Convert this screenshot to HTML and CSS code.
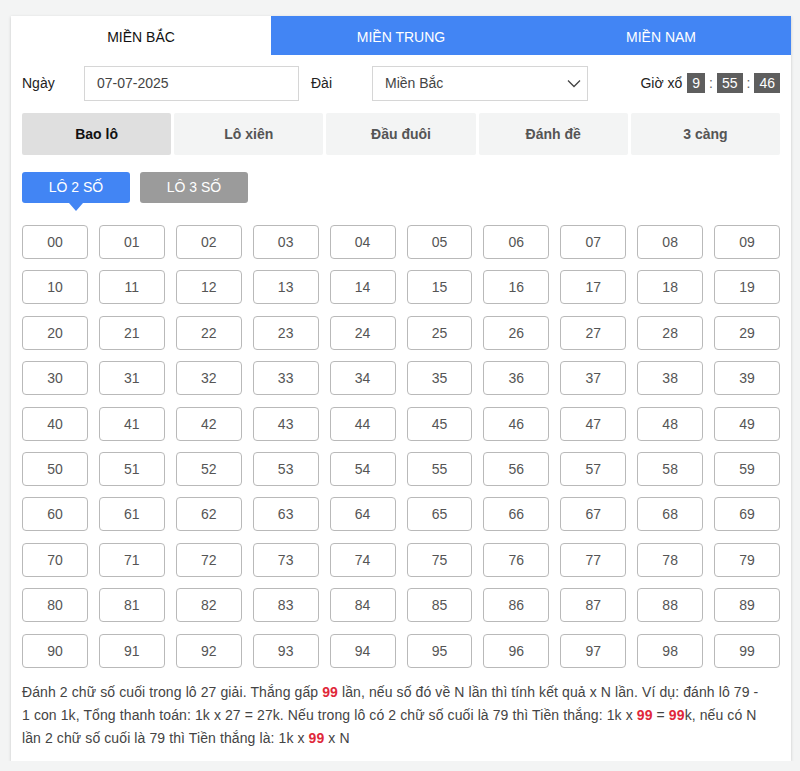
FILE: index.html
```html
<!DOCTYPE html>
<html lang="vi">
  <head>
    <meta charset="UTF-8" />
    <meta name="viewport" content="width=device-width, initial-scale=1.0" />
    <title>Bao lô</title>
    <link rel="stylesheet" href="styles.css">
  </head>
  <body>
    <div class="card">
      <div class="region-tabs">
        <button class="region-tab active">MIỀN BẮC</button>
        <button class="region-tab">MIỀN TRUNG</button>
        <button class="region-tab">MIỀN NAM</button>
      </div>

      <div class="form-row">
        <label class="label label-date">Ngày</label>
        <div class="input date-input">07-07-2025</div>
        <label class="label label-dai">Đài</label>
        <div class="input select-input">
          <span>Miền Bắc</span>
          <svg width="14" height="9" viewBox="0 0 14 9"><path d="M1 1.5 L7 7.5 L13 1.5" fill="none" stroke="#444" stroke-width="1.3"/></svg>
        </div>
        <div class="clock">
          <span class="clock-label">Giờ xổ</span>
          <span class="clock-box">9</span>
          <span class="clock-sep">:</span>
          <span class="clock-box">55</span>
          <span class="clock-sep">:</span>
          <span class="clock-box">46</span>
        </div>
      </div>

      <div class="game-tabs">
        <button class="game-tab active">Bao lô</button>
        <button class="game-tab">Lô xiên</button>
        <button class="game-tab">Đầu đuôi</button>
        <button class="game-tab">Đánh đề</button>
        <button class="game-tab">3 càng</button>
      </div>

      <div class="type-row">
        <button class="type-btn active">LÔ 2 SỐ</button>
        <button class="type-btn">LÔ 3 SỐ</button>
      </div>

      <div id="numbers" class="numbers"></div>

      <p class="note">
        Đánh 2 chữ số cuối trong lô 27 giải. Thắng gấp <b>99</b> lần, nếu số đó về N lần thì tính kết quả x N lần. Ví dụ: đánh lô 79 - 1 con 1k, Tổng thanh toán: 1k x 27 = 27k. Nếu trong lô có 2 chữ số cuối là 79 thì Tiền thắng: 1k x <b>99</b> = <b>99</b>k, nếu có N lần 2 chữ số cuối là 79 thì Tiền thắng là: 1k x <b>99</b> x N
      </p>
    </div>

    <script>
      // tạo bảng số 00-99
      const grid = document.getElementById("numbers");
      let html = "";
      for (let i = 0; i < 100; i++) {
        const n = i < 10 ? "0" + i : "" + i;
        html += `<button class="num">${n}</button>`;
      }
      grid.innerHTML = html;
    </script>
  </body>
</html>
```

FILE: styles.css
```css
body {
  font-family: "Liberation Sans", Arial, sans-serif;
  margin: 0;
  padding: 16px 9px 0 11px;
  background: #f3f4f4;
  color: #333;
}

button {
  font-family: inherit;
  cursor: pointer;
}

.card {
  background: white;
  padding: 0 11px 11px;
  box-shadow: 0 1px 3px rgba(0, 0, 0, 0.18);
}

.region-tabs {
  display: flex;
  margin: 0 -11px;
  background: #4285f4;
}

.region-tab {
  flex: 1;
  height: 39px;
  border: none;
  background: #4285f4;
  color: white;
  font-size: 14px;
  padding: 2px 0 0;
}

.region-tab.active {
  background: white;
  color: #111;
}

.form-row {
  display: flex;
  align-items: center;
  margin-top: 11px;
  height: 34px;
  font-size: 14px;
}

.label {
  color: #222;
}

.label-date {
  width: 62px;
}

.label-dai {
  margin-left: 12px;
  width: 61px;
}

.input {
  box-sizing: border-box;
  height: 35px;
  border: 1px solid #d6d6d6;
  padding: 0 12px;
  display: flex;
  align-items: center;
  color: #444;
}

.date-input {
  width: 215px;
}

.select-input {
  width: 216px;
  justify-content: space-between;
  padding-right: 6px;
}

.clock {
  margin-left: auto;
  display: flex;
  align-items: center;
}

.clock-label {
  margin-right: 5px;
  color: #222;
}

.clock-box {
  background: #5e5e5e;
  color: white;
  height: 20px;
  line-height: 20px;
  padding: 0 5px;
  font-size: 14px;
}

.clock-sep {
  color: #666;
  margin: 0 4px;
}

.game-tabs {
  display: flex;
  gap: 3px;
  margin-top: 13px;
}

.game-tab {
  flex: 1;
  height: 42px;
  border: none;
  border-radius: 2px;
  background: #f3f4f4;
  color: #555;
  font-weight: bold;
  font-size: 14px;
}

.game-tab.active {
  background: #dfdfdf;
  color: #111;
}

.type-row {
  display: flex;
  gap: 10px;
  margin-top: 17px;
}

.type-btn {
  position: relative;
  width: 108px;
  height: 31px;
  border: none;
  border-radius: 3px;
  background: #9b9b9b;
  color: white;
  font-size: 14px;
  padding-bottom: 3px;
}

.type-btn.active {
  background: #4285f4;
}

/* mũi tên nhỏ dưới nút đang chọn */
.type-btn.active::after {
  content: "";
  position: absolute;
  left: 47px;
  bottom: -8px;
  border-left: 7px solid transparent;
  border-right: 7px solid transparent;
  border-top: 8px solid #4285f4;
}

.numbers {
  display: grid;
  grid-template-columns: repeat(10, 1fr);
  column-gap: 11px;
  row-gap: 11.4px;
  margin-top: 22px;
}

.num {
  height: 34px;
  border: 1px solid #b9b9b9;
  border-radius: 4px;
  background: white;
  color: #555;
  font-size: 14px;
  padding: 0;
}

.note {
  margin: 13px 0 0;
  padding-right: 11px;
  font-size: 14px;
  line-height: 23px;
  letter-spacing: 0.1px;
  color: #444;
}

.note b {
  color: #e0283a;
}
```
